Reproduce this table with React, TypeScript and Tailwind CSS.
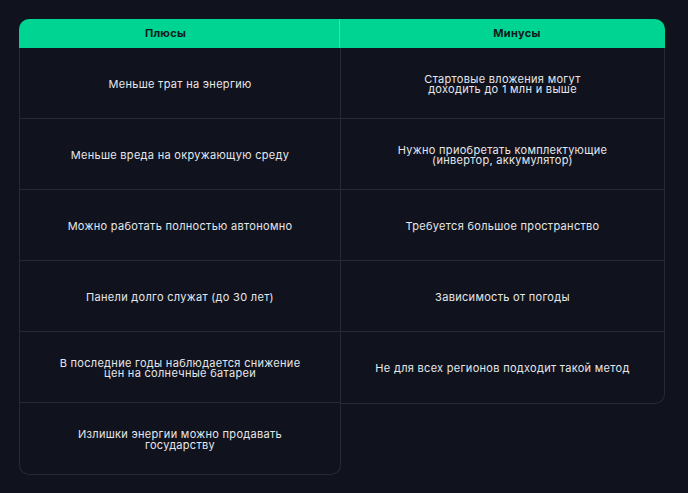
type Row = { pro: string[]; con?: string[] };

const rows: Row[] = [
  { pro: ["Меньше трат на энергию"], con: ["Стартовые вложения могут", "доходить до 1 млн и выше"] },
  { pro: ["Меньше вреда на окружающую среду"], con: ["Нужно приобретать комплектующие", "(инвертор, аккумулятор)"] },
  { pro: ["Можно работать полностью автономно"], con: ["Требуется большое пространство"] },
  { pro: ["Панели долго служат (до 30 лет)"], con: ["Зависимость от погоды"] },
  { pro: ["В последние годы наблюдается снижение", "цен на солнечные батареи"], con: ["Не для всех регионов подходит такой метод"] },
  { pro: ["Излишки энергии можно продавать", "государству"] },
];

function Cell({ lines, last }: { lines: string[]; last: boolean }) {
  return (
    <div
      className={`flex h-[71px] flex-col items-center justify-center pt-[2px] text-center text-[11px] leading-[10.5px] tracking-[0.3px] text-[#e6e7ea] ${
        last ? "" : "border-b border-[#262a35]"
      }`}
    >
      {lines.map((l) => (
        <span key={l}>{l}</span>
      ))}
    </div>
  );
}

export default function App() {
  const pros = rows.map((r) => r.pro);
  const cons = rows.filter((r) => r.con).map((r) => r.con as string[]);

  return (
    <div className="min-h-[493px] w-full bg-[#10131e] px-[19px] pt-[19px] font-['Inter',sans-serif]">
      <div className="w-[646px]">
        {/* Шапка */}
        <div className="flex h-[29px] rounded-t-[10px] bg-[#00d492] text-[11px] font-bold tracking-[0.3px] text-[#0e1a1c]">
          <div className="flex w-[321px] items-center justify-center border-r border-white/25 pr-[27px]">
            Плюсы
          </div>
          <div className="flex flex-1 items-center justify-center pl-[29px]">Минусы</div>
        </div>

        <div className="flex items-start">
          <div className="w-[322px] rounded-b-[10px] border-x border-b border-[#262a35]">
            {pros.map((p, i) => (
              <Cell key={i} lines={p} last={i === pros.length - 1} />
            ))}
          </div>
          <div className="flex-1 rounded-br-[10px] border-r border-b border-[#262a35]">
            {cons.map((c, i) => (
              <Cell key={i} lines={c} last={i === cons.length - 1} />
            ))}
          </div>
        </div>
      </div>
    </div>
  );
}
